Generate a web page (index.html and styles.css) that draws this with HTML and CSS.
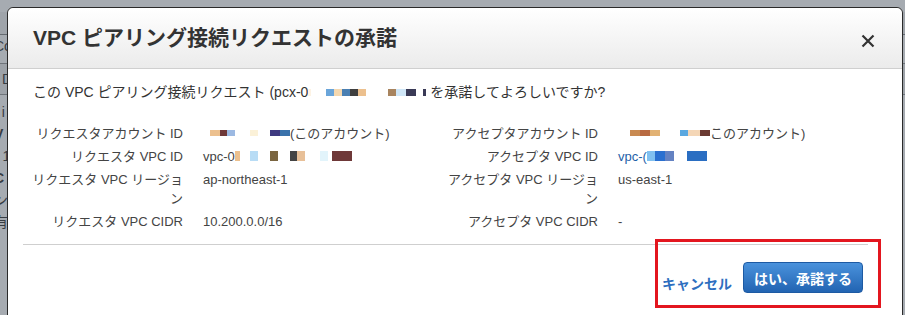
FILE: index.html
```html
<!DOCTYPE html>
<html lang="ja">
<head>
<meta charset="utf-8">
<title>VPC ピアリング接続リクエストの承諾</title>
<link rel="stylesheet" href="styles.css">
</head>
<body>
<div class="page">
  <div class="page-top"></div>
  <div class="page-line">Co</div>
  <div class="page-box">D</div>
  <div class="page-line">: i</div>
  <div class="page-line strong">V</div>
  <div class="page-line">- 1</div>
  <div class="page-line strong">C</div>
  <div class="page-line">ン</div>
  <div class="page-line">有</div>
</div>

<div class="overlay">
  <div class="dialog">
    <div class="header">
      <h1 class="title">VPC ピアリング接続リクエストの承諾</h1>
      <svg class="close" width="14" height="14" viewBox="0 0 14 14" aria-label="閉じる">
        <path d="M1.5 1.5 L12.5 12.5 M12.5 1.5 L1.5 12.5" stroke="#333" stroke-width="2.2" stroke-linecap="butt"/>
      </svg>
    </div>

    <div class="body">
      <p class="question">この VPC ピアリング接続リクエスト (pcx-0<span class="rd q"><i class="w3 c-pale"></i><i class="g15"></i><i class="w8 c-lb"></i><i class="w8 c-beige"></i><i class="w8 c-steel"></i><i class="w8 c-dark"></i><i class="w8 c-tan"></i><i class="g22"></i><i class="w8 c-brown"></i><i class="w10 c-pb"></i><i class="w10 c-navy"></i><i class="g7"></i><i class="w3 c-navy"></i><i class="g4"></i></span>を承諾してよろしいですか?</p>

      <div class="grid">
        <div class="lbl">リクエスタアカウント ID</div>
        <div class="val"><span class="rd s"><i class="g7"></i><i class="w10 c-tan"></i><i class="w7 c-maroon"></i><i class="w8 c-lblue"></i><i class="g15"></i><i class="w8 c-cream"></i><i class="g12"></i><i class="w10 c-indigo"></i><i class="w10 c-steel2"></i></span>(このアカウント)</div>
        <div class="lbl">アクセプタアカウント ID</div>
        <div class="val"><span class="rd s"><i class="g12"></i><i class="w10 c-rust1"></i><i class="w10 c-rust2"></i><i class="w10 c-tan2"></i><i class="g20"></i><i class="w8 c-sky"></i><i class="w12 c-peach"></i><i class="w10 c-maroon2"></i></span>このアカウント)</div>

        <div class="lbl">リクエスタ VPC ID</div>
        <div class="val">vpc-0<span class="rd t"><i class="w5 c-tan"></i><i class="g10"></i><i class="w8 c-ice"></i><i class="g12"></i><i class="w8 c-olive"></i><i class="g12"></i><i class="w7 c-char"></i><i class="w8 c-tan3"></i><i class="g15"></i><i class="w8 c-frost"></i><i class="g4"></i><i class="w20 c-maroon"></i></span></div>
        <div class="lbl">アクセプタ VPC ID</div>
        <div class="val link">vpc-(<span class="rd t"><i class="w8 c-sky2"></i><i class="w10 c-blue"></i><i class="w9 c-slate"></i><i class="g13"></i><i class="w20 c-blue2"></i></span></div>

        <div class="lbl">リクエスタ VPC リージョン</div>
        <div class="val">ap-northeast-1</div>
        <div class="lbl">アクセプタ VPC リージョン</div>
        <div class="val">us-east-1</div>

        <div class="lbl">リクエスタ VPC CIDR</div>
        <div class="val">10.200.0.0/16</div>
        <div class="lbl">アクセプタ VPC CIDR</div>
        <div class="val">-</div>
      </div>
    </div>

    <div class="sep"></div>

    <div class="footer">
      <a class="cancel" href="#">キャンセル</a>
      <button class="accept" type="button">はい、承諾する</button>
    </div>
  </div>
</div>

<div class="highlight"></div>
</body>
</html>
```

FILE: styles.css
```css
html, body {
  margin: 0;
  padding: 0;
}

body {
  width: 905px;
  height: 315px;
  overflow: hidden;
  position: relative;
  background: #ffffff;
  font-family: "Liberation Sans", "Noto Sans CJK JP", sans-serif;
  color: #444;
}

/* page behind the modal */
.page {
  padding-top: 12px;
  font-size: 14px;
  color: #333;
}

.page-top {
  height: 22px;
  border-bottom: 1px solid #888;
  background: #f3f3f3;
}

.page-line {
  margin-left: -6px;
  height: 22px;
  line-height: 22px;
}

.page-line.strong {
  font-weight: bold;
}

.page-box {
  margin: 6px 0;
  height: 30px;
  line-height: 30px;
  background: #eeeeee;
  border-top: 1px solid #999;
  border-bottom: 1px solid #999;
  padding-left: 2px;
}

/* dimmed overlay */
.overlay {
  position: absolute;
  inset: 0;
  background: rgba(62, 72, 84, 0.46);
}

.dialog {
  margin: 7px 2px 0 7px;
  height: 320px;
  background: #fff;
  border: 1px solid #2a2a2a;
  border-radius: 6px 6px 0 0;
  overflow: hidden;
}

.header {
  height: 60px;
  padding: 0 27px 0 25px;
  display: flex;
  align-items: center;
  justify-content: space-between;
  background: linear-gradient(#ffffff, #ebebeb);
  border-bottom: 1px solid #cfcfcf;
  border-radius: 6px 6px 0 0;
}

.title {
  margin: 0;
  font-size: 21px;
  font-weight: bold;
  color: #333;
  line-height: 24px;
}

.close {
  margin-top: 6px;
  display: block;
}

.body {
  padding: 13px 25px 0 20px;
}

.question {
  margin: 0 0 0 5px;
  font-size: 14px;
  line-height: 20px;
  color: #333;
}

.grid {
  margin-top: 20px;
  display: grid;
  grid-template-columns: 155px 220px 155px 1fr;
  column-gap: 20px;
  font-size: 13px;
  line-height: 19px;
}

.lbl {
  padding: 2px 0;
  text-align: right;
  color: #444;
}

.val {
  padding: 2px 0;
  color: #444;
  white-space: nowrap;
}

.val.link {
  color: #1f5fa8;
}

/* redaction blobs */
.rd {
  display: inline-flex;
  vertical-align: middle;
  filter: blur(0.6px);
}

.rd.s { height: 6px; margin-top: -3px; }
.rd.t { height: 10px; margin-top: -3px; }
.rd.q { height: 7px; margin-top: -2px; }

.rd i { display: block; height: 100%; }

.w3 { width: 3px; }
.w5 { width: 5px; }
.w6 { width: 6px; }
.w7 { width: 7px; }
.w8 { width: 8px; }
.w9 { width: 9px; }
.w10 { width: 10px; }
.w12 { width: 12px; }
.w20 { width: 20px; }
.g4 { width: 4px; }
.g6 { width: 6px; }
.g7 { width: 7px; }
.g8 { width: 8px; }
.g10 { width: 10px; }
.g12 { width: 12px; }
.g13 { width: 13px; }
.g15 { width: 15px; }
.g20 { width: 20px; }
.g22 { width: 22px; }

.c-pale { background: #fdf3e4; }
.c-lb { background: #6aa5da; }
.c-beige { background: #f4d8b0; }
.c-steel { background: #4a7fb2; }
.c-dark { background: #3e3e3e; }
.c-tan { background: #ecc08e; }
.c-brown { background: #a8845f; }
.c-pb { background: #cfe6f7; }
.c-navy { background: #3a3a56; }
.c-maroon { background: #6e3838; }
.c-lblue { background: #9cb9e2; }
.c-cream { background: #fbf1d8; }
.c-indigo { background: #3e3a80; }
.c-steel2 { background: #3a72ab; }
.c-rust1 { background: #c98a52; }
.c-rust2 { background: #b86a42; }
.c-tan2 { background: #e2b274; }
.c-sky { background: #5aa8e0; }
.c-peach { background: #f4d6b6; }
.c-maroon2 { background: #6a3a32; }
.c-ice { background: #b8dcf5; }
.c-olive { background: #7a6540; }
.c-char { background: #444444; }
.c-tan3 { background: #e8c098; }
.c-frost { background: #e2f4fb; }
.c-sky2 { background: #80c0f0; }
.c-blue { background: #2a70d0; }
.c-slate { background: #6482c2; }
.c-blue2 { background: #2a6ec2; }

.sep {
  margin: 11px 34px 0 15px;
  border-top: 1px solid #cfcfcf;
}

.footer {
  padding: 17px 39px 0 0;
  display: flex;
  justify-content: flex-end;
  align-items: center;
  gap: 11px;
}

.cancel {
  font-size: 14px;
  font-weight: bold;
  color: #2e6fbf;
  text-decoration: none;
  margin-top: 10px;
}

.accept {
  height: 31px;
  width: 120px;
  padding: 0;
  font-family: inherit;
  font-size: 14px;
  font-weight: bold;
  color: #fff;
  background: linear-gradient(#4a92dc, #2264b2);
  border: 1px solid #1d5aa3;
  border-radius: 4px;
}

/* red annotation rectangle drawn over the screenshot */
.highlight {
  position: absolute;
  left: 655px;
  top: 239px;
  width: 220px;
  height: 63px;
  border: 3px solid #e3161f;
}
```
